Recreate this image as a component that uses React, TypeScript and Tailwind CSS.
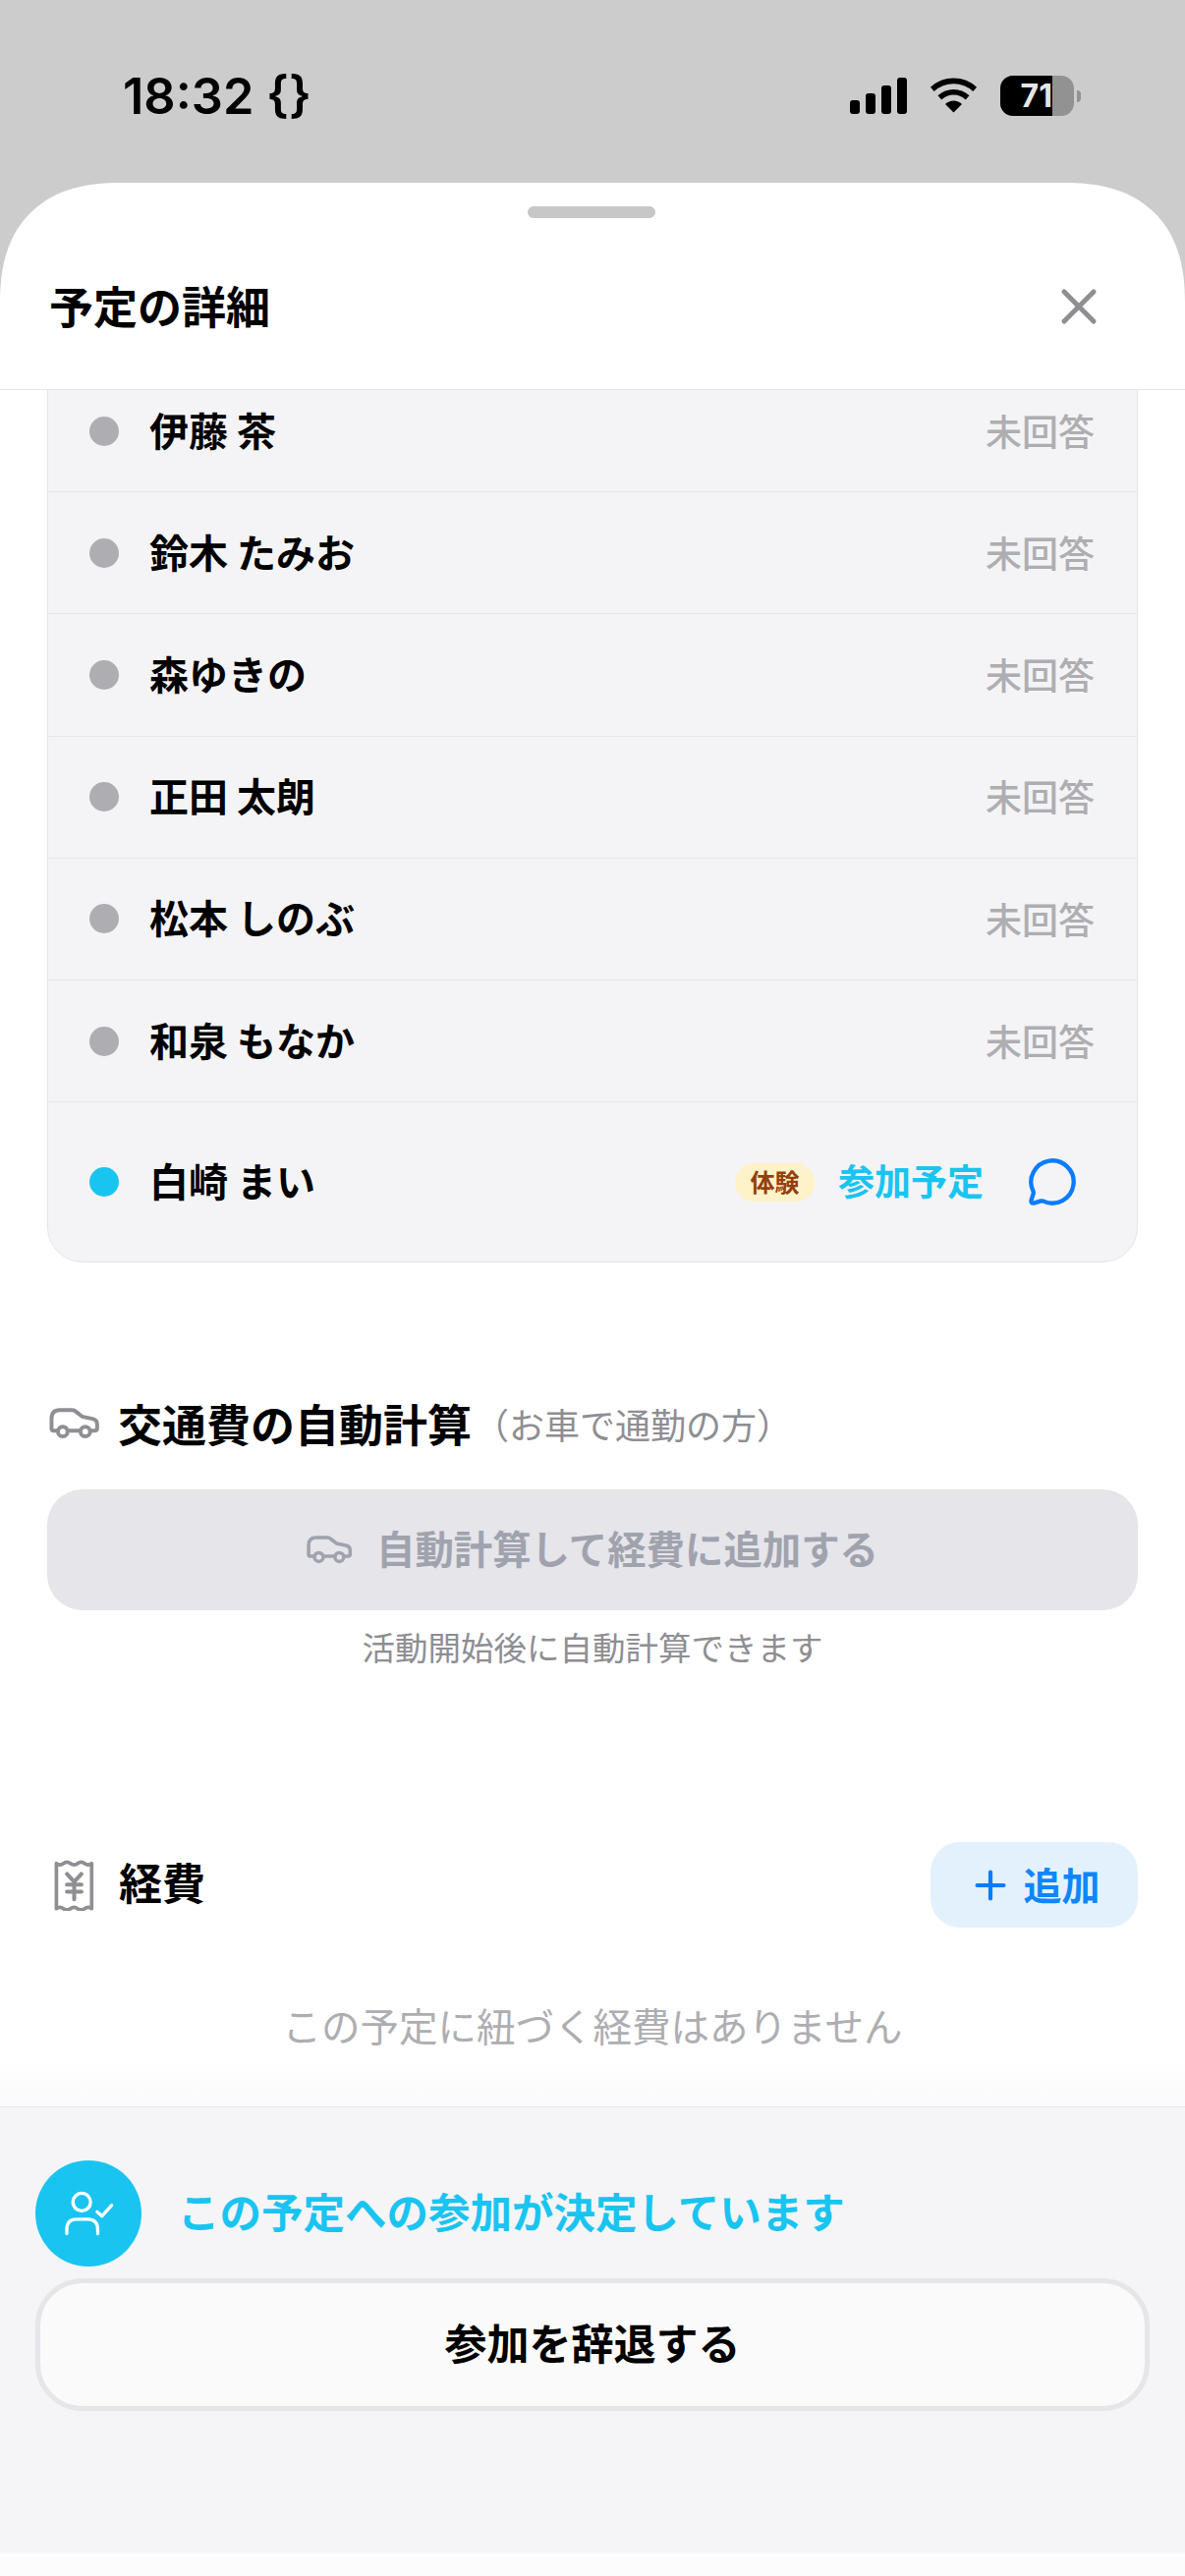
import { MessageCircle, Plus, X } from "lucide-react";

const members = ["伊藤 茶", "鈴木 たみお", "森ゆきの", "正田 太朗", "松本 しのぶ", "和泉 もなか"];

const StatusIcons = () => (
  <div className="flex items-center">
    <svg width="58" height="37" viewBox="0 0 58 37" fill="#000">
      <rect x="0" y="23" width="10" height="14" rx="3" />
      <rect x="16" y="16" width="10" height="21" rx="3" />
      <rect x="32" y="8" width="10" height="29" rx="3" />
      <rect x="48" y="0" width="10" height="37" rx="3" />
    </svg>
    <svg className="ml-[23px]" width="49" height="37" viewBox="0 0 52 38" fill="none" stroke="#000" strokeWidth="6">
      <path d="M3 12C16 0 36 0 49 12" />
      <path d="M11 21C20 13 32 13 41 21" />
      <path d="M17 28 26 37 35 28C30 23 22 23 17 28Z" fill="#000" stroke="none" />
    </svg>
    <div className="ml-[23px] flex h-[41px] w-[75px] items-center overflow-hidden rounded-[13px] bg-[#929292]">
      <div className="flex h-full w-[53px] items-center justify-end bg-black">
        <span className="text-[32px] leading-none font-bold text-[#e5e5e5] font-['Inter',sans-serif]">71</span>
      </div>
    </div>
    <div className="ml-[3px] h-[12px] w-[4px] rounded-r-full bg-[#929292]" />
  </div>
);

const CarIcon = ({ width, height }: { width: number; height: number }) => (
  <svg width={width} height={height} viewBox="58 48 158 104" fill="none" stroke="currentColor" strokeWidth="12" strokeLinecap="round" strokeLinejoin="round">
    <path d="M84 122H72Q65 122 65 115V85Q65 58 90 58H130Q136 58 141 63L160 78 192 85Q207 88 207 102V115Q207 122 197 122H186" />
    <path d="M116 122H154" />
    <circle cx="100" cy="125" r="15" />
    <circle cx="170" cy="125" r="15" />
  </svg>
);

const MemberRow = ({ name }: { name: string }) => (
  <div className="flex h-[124.2px] items-center border-b border-[#e5e5ea] pl-[42px] pr-[43px]">
    <div className="h-[30px] w-[30px] rounded-full bg-[#aeaeb2]" />
    <span className="ml-[31px] flex-1 pb-[4px] text-[40px] font-bold text-black">{name}</span>
    <span className="text-[37px] font-medium text-[#aeaeb2]">未回答</span>
  </div>
);

export default function App() {
  return (
    <div className="flex h-[2622px] w-[1206px] flex-col overflow-hidden bg-[#cccccc] font-['Noto_Sans_CJK_JP','Noto_Sans',sans-serif]">
      <div className="flex h-[186px] shrink-0 items-start justify-between pl-[125px] pr-[106px]">
        <span className="mt-[69px] text-[50.500px] leading-[58px] font-semibold text-black font-['Inter',sans-serif]">18:32 {"{}"}</span>
        <div className="mt-[77px]">
          <StatusIcons />
        </div>
      </div>

      <div className="flex flex-1 flex-col overflow-hidden rounded-t-[122px] bg-white [corner-shape:superellipse(1.25)]">
        <div className="relative flex h-[211px] shrink-0 items-end justify-between border-b border-[#e5e5ea] pb-[52px] pl-[50px] pr-[78px]">
          <div className="absolute left-[537px] top-[24px] h-[12px] w-[130px] rounded-full bg-[#c7c7c7]" />
          <span className="text-[45px] leading-[66px] font-bold text-black">予定の詳細</span>
          <X className="mb-[2px] h-[60px] w-[60px] text-[#8e8e93]" strokeWidth={2} />
        </div>

        <div className="relative flex-1 overflow-hidden">
          <div className="-mt-[61px] px-[48px]">
            <div className="overflow-hidden rounded-[36px] border border-[#e5e5ea] bg-[#f4f4f6] pt-[40px]">
              {members.map((m) => (
                <MemberRow key={m} name={m} />
              ))}
              <div className="flex h-[162px] items-center pl-[42px] pr-[60px]">
                <div className="h-[30px] w-[30px] rounded-full bg-[#1ac4f0]" />
                <span className="ml-[31px] flex-1 pb-[4px] text-[40px] font-bold text-black">白崎 まい</span>
                <span className="flex h-[39px] w-[81px] items-center justify-center rounded-full bg-[#fdf2c8] text-[25px] font-bold text-[#92400e]">体験</span>
                <span className="ml-[24px] pb-[3px] text-[37px] font-bold text-[#1ac4f0]">参加予定</span>
                <MessageCircle className="ml-[44px] h-[52px] w-[52px] text-[#0a7cff]" strokeWidth={2} />
              </div>
            </div>

            <div className="mt-[134px] flex items-center">
              <div className="ml-[2px] text-[#8e8e93]">
                <CarIcon width={52} height={34} />
              </div>
              <span className="ml-[18px] text-[45px] leading-[60px] font-bold text-black">交通費の自動計算</span>
              <span className="ml-[2px] text-[36px] text-[#8e8e93]">（お車で通勤の方）</span>
            </div>

            <div className="mt-[37px] flex h-[123px] items-center justify-center rounded-[36px] bg-[#e5e5ea] text-[#a0a3ad]">
              <CarIcon width={47} height={31} />
              <span className="ml-[24px] pb-[6px] text-[39.400px] font-bold">自動計算して経費に追加する</span>
            </div>
            <p className="mt-[14px] text-center text-[33.500px] leading-[46px] text-[#8e8e93]">活動開始後に自動計算できます</p>

            <div className="mt-[176px] flex items-center justify-between">
              <div className="flex items-center">
                <svg className="ml-[6px] text-[#8e8e93]" width="42" height="52" viewBox="40 35 125 155" fill="none" stroke="currentColor" strokeWidth="11" strokeLinejoin="round">
                  <path d="M50 46q10.700 8 21.400 0t21.400 0t21.400 0t21.400 0t21.400 0V183q-10.700 -8 -21.400 0t-21.400 0t-21.400 0t-21.400 0t-21.400 0Z" />
                  <path d="M82 78 104 102 126 78M82 110H126M82 132H126M104 102V155" strokeWidth="12" strokeLinecap="round" />
                </svg>
                <span className="ml-[25px] pb-[8px] text-[44px] font-bold text-black">経費</span>
              </div>
              <div className="flex h-[87px] w-[211px] items-center justify-center rounded-[30px] bg-[#e3f1fd]">
                <Plus className="h-[46px] w-[46px] text-[#0a7cff]" strokeWidth={2.2} />
                <span className="ml-[10px] pb-[3px] text-[39px] font-bold text-[#0f86ff]">追加</span>
              </div>
            </div>
            <p className="mt-[71px] text-center text-[39.500px] leading-[56px] text-[#aeaeb2]">この予定に紐づく経費はありません</p>
          </div>
          <div className="absolute inset-x-0 bottom-0 h-[50px] bg-gradient-to-b from-white/0 to-[#fafafa]" />
        </div>

        <div className="flex h-[454px] shrink-0 flex-col border-t border-[#e5e5ea] bg-[#f5f5f7] px-[36px] pt-[54px]">
          <div className="flex items-center">
            <div className="flex h-[108px] w-[108px] items-center justify-center rounded-full bg-[#1ac4f0]">
              <svg width="53" height="50" viewBox="100 115 160 150" fill="none" stroke="#fff" strokeWidth="10" strokeLinecap="round" strokeLinejoin="round">
                <circle cx="158" cy="155" r="27" />
                <path d="M112 252V240Q112 208 142 208H176Q207 208 207 240V252" />
                <path d="M205 185 220 198 250 165" />
              </svg>
            </div>
            <span className="ml-[37px] pb-[6px] text-[42.500px] font-bold text-[#1ac4f0]">この予定への参加が決定しています</span>
          </div>
          <div className="mt-[12px] flex h-[135px] items-center justify-center rounded-[48px] border-[5px] border-[#e5e5ea] bg-[#fafafa] pb-[6px] text-[43px] font-bold text-black">
            参加を辞退する
          </div>
        </div>
        <div className="h-[24px] shrink-0 bg-[#fcfcfc]" />
      </div>
    </div>
  );
}
